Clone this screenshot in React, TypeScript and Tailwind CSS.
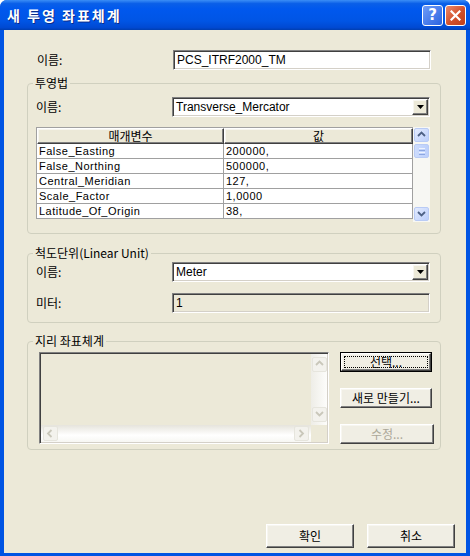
import React from "react"

const sunken =
  "border border-t-[#808080] border-l-[#808080] border-b-white border-r-white shadow-[inset_1px_1px_0_#404040,inset_-1px_-1px_0_#d4d0c8]"
const raised =
  "border border-t-white border-l-white border-b-[#404040] border-r-[#404040] shadow-[inset_-1px_-1px_0_#808080,inset_1px_1px_0_#f7f6f0]"

function Chevron({ dir, color }: { dir: "up" | "down" | "left" | "right"; color: string }) {
  const d = {
    up: "M1 5 L4.5 1.5 L8 5",
    down: "M1 2 L4.5 5.5 L8 2",
    left: "M5.5 1 L2 4.5 L5.5 8",
    right: "M2.5 1 L6 4.5 L2.5 8",
  }[dir]
  return (
    <svg width="9" height="9" viewBox="0 0 9 9">
      <path d={d} fill="none" stroke={color} strokeWidth="1.8" />
    </svg>
  )
}

function SbButton({ dir, disabled }: { dir: "up" | "down" | "left" | "right"; disabled?: boolean }) {
  if (disabled) {
    return (
      <div className="w-[15px] h-[15px] shrink-0 rounded-[2px] border border-[#e6e5dd] bg-[#f3f2ed] flex items-center justify-center">
        <Chevron dir={dir} color="#c9c7ba" />
      </div>
    )
  }
  return (
    <div className="w-[15px] h-[14px] shrink-0 rounded-[2px] border border-[#b9cbf5] bg-[linear-gradient(135deg,#e3ebfe,#bccffb)] flex items-center justify-center">
      <Chevron dir={dir} color="#4d6185" />
    </div>
  )
}

function DropButton() {
  return (
    <div className={`w-[16px] h-[16px] shrink-0 bg-[#ece9d8] flex items-center justify-center ${raised}`}>
      <svg width="7" height="4" viewBox="0 0 7 4">
        <path d="M0 0h7L3.5 4z" fill="#000" />
      </svg>
    </div>
  )
}

function Combo({ value }: { value: string }) {
  return (
    <div className={`w-[258px] h-[20px] p-[1px] bg-white flex items-center ${sunken}`}>
      <span className="flex-1 pl-[2px] leading-[14px]">{value}</span>
      <DropButton />
    </div>
  )
}

function TextBox({ value, disabled }: { value: string; disabled?: boolean }) {
  return (
    <div
      className={`w-[258px] h-[20px] flex items-center pl-[3px] leading-[14px] ${disabled ? "bg-[#ece9d8]" : "bg-white"} ${sunken}`}
    >
      {value}
    </div>
  )
}

function Btn({ label, w, h, disabled, focused }: { label: string; w: string; h: string; disabled?: boolean; focused?: boolean }) {
  if (focused) {
    return (
      <div className={`${w} ${h} border border-black flex`}>
        <div className={`flex-1 flex bg-[#f0eee4] ${raised}`}>
          <div className="flex-1 m-[2px] border border-dotted border-black flex items-center justify-center">
            {label}
          </div>
        </div>
      </div>
    )
  }
  return (
    <div
      className={`${w} ${h} flex items-center justify-center bg-[#f0eee4] ${raised} ${disabled ? "text-[#aca899]" : ""}`}
    >
      {label}
    </div>
  )
}

const params = [
  ["False_Easting", "200000,"],
  ["False_Northing", "500000,"],
  ["Central_Meridian", "127,"],
  ["Scale_Factor", "1,0000"],
  ["Latitude_Of_Origin", "38,"],
]

export default function App() {
  return (
    <div className="w-[470px] h-[556px] font-['Liberation_Sans','Noto_Sans_CJK_KR',sans-serif] text-[12px] text-black">
      <div className="w-full h-full flex flex-col bg-[#0054e3] rounded-t-[7px] overflow-hidden">
        {/* Title bar */}
        <div className="h-[30px] shrink-0 flex items-center pl-[7px] pr-[4px] bg-[linear-gradient(180deg,#3b8ef6_0%,#0a5fe8_12%,#0058ee_30%,#0055e5_70%,#0049d2_92%,#003eb0_100%)]">
          <span className="flex-1 text-white font-bold text-[14px] tracking-[2px] font-['Noto_Sans_CJK_KR',sans-serif] [text-shadow:1px_1px_0_#0a2a8a]">
            새 투영 좌표체계
          </span>
          <div className="w-[21px] h-[21px] rounded-[3px] border border-white bg-[linear-gradient(135deg,#6f9cf8,#2b63e0)] flex items-center justify-center text-white font-bold text-[15px] leading-none font-['DejaVu_Sans',sans-serif]">
            ?
          </div>
          <div className="w-[21px] h-[21px] ml-[2px] rounded-[3px] border border-white bg-[linear-gradient(135deg,#ec8a6c,#d2502b_55%,#c2401a)] flex items-center justify-center">
            <svg width="11" height="11" viewBox="0 0 11 11">
              <path d="M1.5 1.5l8 8M9.5 1.5l-8 8" stroke="#fff" strokeWidth="2.2" strokeLinecap="square" />
            </svg>
          </div>
        </div>

        {/* Client */}
        <div className="flex-1 mx-[4px] mb-[3px] bg-[#ece9d8] flex flex-col">
          <div className="mt-[20px] pl-[33px] flex items-center">
            <span className="w-[136px] font-['Noto_Sans_CJK_KR',sans-serif]">이름:</span>
            <TextBox value="PCS_ITRF2000_TM" />
          </div>

          {/* 투영법 */}
          <fieldset className="ml-[23px] w-[414px] mt-[6px] border border-[#d0d0bf] rounded-[4px] pb-[11px]">
            <legend className="ml-[5px] px-[2px] leading-[14px] font-['Noto_Sans_CJK_KR',sans-serif]">투영법</legend>
            <div className="mt-[7px] pl-[8px] flex items-center">
              <span className="w-[136px] font-['Noto_Sans_CJK_KR',sans-serif]">이름:</span>
              <Combo value="Transverse_Mercator" />
            </div>
            <div className="mt-[10px] ml-[8px] h-[95px] flex">
              <div className="w-[377px] flex flex-col">
                <div className="flex h-[17px] border-t border-l border-[#a0a0a0]">
                  <div className={`w-[187px] flex items-center justify-center bg-[#ece9d8] ${raised} font-['Noto_Sans_CJK_KR',sans-serif]`}>
                    매개변수
                  </div>
                  <div className={`w-[189px] flex items-center justify-center bg-[#ece9d8] ${raised} font-['Noto_Sans_CJK_KR',sans-serif]`}>
                    값
                  </div>
                </div>
                {params.map(([k, v]) => (
                  <div key={k} className="flex h-[15px] bg-white border-l border-b border-[#a0a0a0] text-[11px] leading-[14px] tracking-[0.5px]">
                    <div className="w-[187px] pl-[2px] border-r border-[#a0a0a0]">{k}</div>
                    <div className="w-[189px] pl-[2px] border-r border-[#a0a0a0]">{v}</div>
                  </div>
                ))}
              </div>
              <div className="w-[17px] h-full bg-[#f7f7f3] flex flex-col items-center py-[1px]">
                <SbButton dir="up" />
                <div className="mt-[2px] w-[15px] h-[14px] rounded-[2px] border border-[#b9cbf5] bg-[linear-gradient(90deg,#cddcfd,#bccffb)] flex flex-col items-center justify-center gap-[1px]">
                  <div className="w-[6px] h-[1px] bg-[#eef3fe]" />
                  <div className="w-[6px] h-[1px] bg-[#8ca6e0]" />
                  <div className="w-[6px] h-[1px] bg-[#eef3fe]" />
                  <div className="w-[6px] h-[1px] bg-[#8ca6e0]" />
                </div>
                <div className="flex-1" />
                <SbButton dir="down" />
              </div>
            </div>
          </fieldset>

          {/* 척도단위 */}
          <fieldset className="ml-[23px] w-[414px] mt-[12px] border border-[#d0d0bf] rounded-[4px] pb-[9px]">
            <legend className="ml-[5px] px-[2px] leading-[14px] font-['Noto_Sans_CJK_KR',sans-serif]">척도단위(Linear Unit)</legend>
            <div className="mt-[2px] pl-[8px] flex items-center">
              <span className="w-[136px] font-['Noto_Sans_CJK_KR',sans-serif]">이름:</span>
              <Combo value="Meter" />
            </div>
            <div className="mt-[11px] pl-[8px] flex items-center">
              <span className="w-[136px] font-['Noto_Sans_CJK_KR',sans-serif]">미터:</span>
              <TextBox value="1" disabled />
            </div>
          </fieldset>

          {/* 지리 좌표체계 */}
          <fieldset className="ml-[23px] w-[414px] mt-[11px] border border-[#d0d0bf] rounded-[4px] pb-[5px]">
            <legend className="ml-[5px] px-[2px] leading-[14px] font-['Noto_Sans_CJK_KR',sans-serif]">지리 좌표체계</legend>
            <div className="mt-[4px] pl-[11px] flex gap-[11px]">
              <div className={`w-[290px] h-[92px] p-[1px] bg-[#ece9d8] flex flex-col ${sunken}`}>
                <div className="flex-1 flex">
                  <div className="flex-1" />
                  <div className="w-[16px] flex flex-col items-center py-[3px] bg-[linear-gradient(90deg,#eeede7,#fdfdfb)]">
                    <SbButton dir="up" disabled />
                    <div className="flex-1" />
                    <SbButton dir="down" disabled />
                  </div>
                </div>
                <div className="h-[17px] flex">
                  <div className="flex-1 flex items-center px-[2px] bg-[linear-gradient(180deg,#e6e4dc,#ffffff_60%,#f7f7f3)]">
                    <SbButton dir="left" disabled />
                    <div className="flex-1" />
                    <SbButton dir="right" disabled />
                  </div>
                  <div className="w-[16px] bg-[#ece9d8]" />
                </div>
              </div>
              <div className="flex flex-col gap-[16px] font-['Noto_Sans_CJK_KR',sans-serif]">
                <Btn label="선택..." w="w-[92px]" h="h-[20px]" focused />
                <Btn label="새로 만들기..." w="w-[92px]" h="h-[20px]" />
                <Btn label="수정..." w="w-[94px]" h="h-[20px]" disabled />
              </div>
            </div>
          </fieldset>

          <div className="flex-1" />
          <div className="flex justify-end gap-[13px] pr-[11px] pb-[5px] font-['Noto_Sans_CJK_KR',sans-serif]">
            <Btn label="확인" w="w-[88px]" h="h-[24px]" />
            <Btn label="취소" w="w-[88px]" h="h-[24px]" />
          </div>
        </div>
      </div>
    </div>
  )
}
